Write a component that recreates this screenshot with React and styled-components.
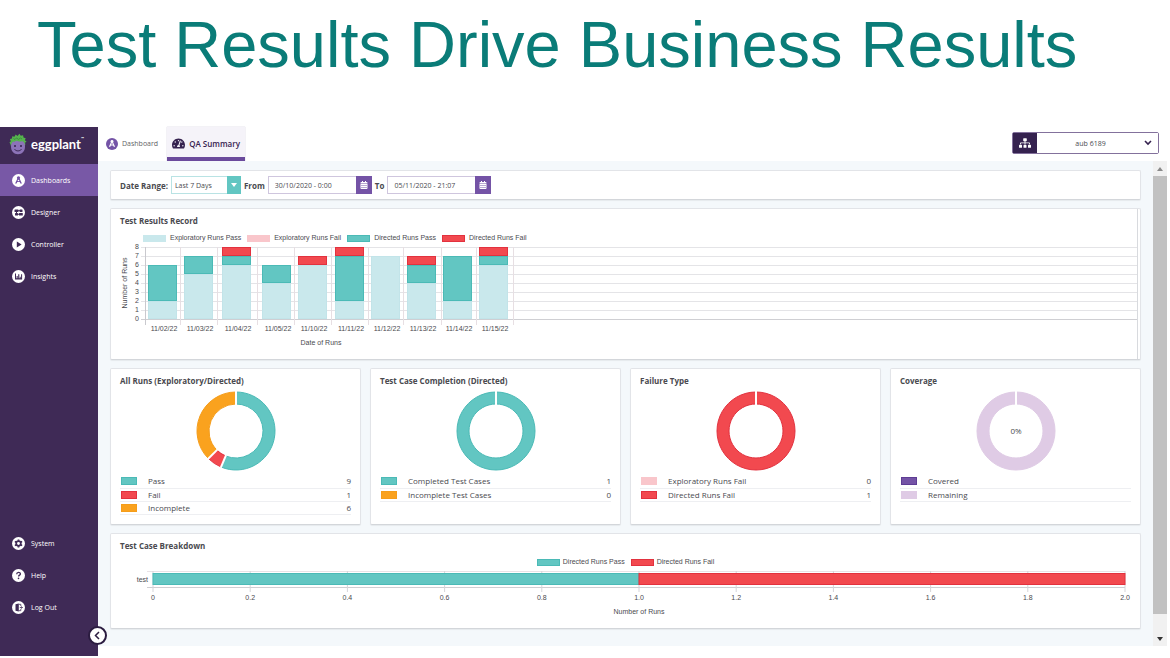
import React from 'react';
import styled, { createGlobalStyle } from 'styled-components';
import { FaCalendarAlt, FaSitemap, FaTachometerAlt } from 'react-icons/fa';

const colors = {
  teal: '#62c6c2',
  tealDark: '#4bbab6',
  aqua: '#c9e8ec',
  red: '#f2494f',
  redDark: '#e2323f',
  pink: '#f9c6cb',
  orange: '#faa21e',
  purple: '#7453a6',
  lilac: '#dfcbe5',
  dark: '#3f2a56',
  text: '#4a4a4f',
};

const uiFont = '"Open Sans", "Noto Sans", sans-serif';
const chartFont = '"Liberation Sans", Arial, sans-serif';

const GlobalStyle = createGlobalStyle`
  * {
    box-sizing: border-box;
  }

  body {
    margin: 0;
    background: #fff;
    color: ${colors.text};
    font-family: ${uiFont};
    font-size: 8px;
  }

  button, input, select {
    font-family: inherit;
    color: inherit;
  }
`;

const Page = styled.div`
  display: flex;
  flex-direction: column;
  min-height: 100vh;
  padding-bottom: 2px;
`;

const PageTitle = styled.h1`
  margin: 0;
  padding: 8px 37px 0;
  height: 127px;
  font-family: ${chartFont};
  font-size: 65px;
  font-weight: 400;
  line-height: 74px;
  white-space: nowrap;
  color: #0a7c78;
`;

const Shell = styled.div`
  display: flex;
  flex: 1;
`;

const Sidebar = styled.aside`
  position: relative;
  display: flex;
  flex-direction: column;
  flex: none;
  width: 98px;
  padding-bottom: 33px;
  background: ${colors.dark};
`;

const Logo = styled.div`
  display: flex;
  align-items: center;
  gap: 4px;
  height: 37px;
  padding: 0 0 4px 9px;
  color: #fff;
  font-family: Lato, sans-serif;
  font-size: 13px;
  font-weight: 700;
  line-height: 20px;

  sup {
    align-self: flex-start;
    margin: 6px 0 0 -4px;
    font-size: 4px;
    line-height: 12px;
  }
`;

const Nav = styled.nav`
  display: flex;
  flex-direction: column;

  &:last-of-type {
    margin-top: auto;
  }
`;

const NavLink = styled.a`
  display: flex;
  align-items: center;
  gap: 6px;
  height: 32px;
  padding: 0 0 0 12px;
  background: ${({ $active }) => ($active ? '#7858a6' : 'transparent')};
  color: #fff;
  font-size: 7px;
  font-weight: 400;
  text-decoration: none;
`;

const CollapseButton = styled.button`
  position: absolute;
  right: -9px;
  bottom: 11px;
  display: flex;
  align-items: center;
  justify-content: center;
  width: 19px;
  height: 19px;
  padding: 0;
  border: 2px solid #2b1c40;
  border-radius: 50%;
  background: #fff;
`;

const Main = styled.main`
  display: flex;
  flex-direction: column;
  flex: 1;
  min-width: 0;
  padding: 0 3px 10px 0;
`;

const TopBar = styled.header`
  display: flex;
  justify-content: space-between;
  height: 34px;
  padding-right: 8px;
`;

const Tabs = styled.div`
  display: flex;
`;

const Tab = styled.a`
  display: flex;
  align-items: center;
  gap: 4px;
  padding: ${({ $active }) => ($active ? '2px 5px 0' : '0 9px 1px 8px')};
  border-bottom: ${({ $active }) => ($active ? '4px solid #6b4a9c' : '0')};
  background: ${({ $active }) => ($active ? '#f5f3f9' : '#fff')};
  box-shadow: ${({ $active }) => ($active ? '0 0 1px #b9b3c6' : 'none')};
  color: ${({ $active }) => ($active ? '#35224f' : '#5f5f66')};
  font-size: ${({ $active }) => ($active ? '8px' : '7px')};
  font-weight: ${({ $active }) => ($active ? 600 : 400)};
  text-decoration: none;
`;

const SuitePicker = styled.label`
  position: relative;
  display: flex;
  width: 147px;
  height: 22px;
  margin-top: 5px;
  border: 1px solid #83719c;
  border-radius: 2px;

  > svg:last-child {
    position: absolute;
    top: 7px;
    right: 6px;
    pointer-events: none;
  }
`;

const PickerIcon = styled.span`
  display: flex;
  align-items: center;
  justify-content: center;
  width: 24px;
  background: #35224f;
  color: #fff;
  font-size: 12px;
`;

const PickerSelect = styled.select`
  flex: 1;
  padding: 0 14px 0 0;
  border: 0;
  appearance: none;
  background: #fff;
  font-size: 7px;
  text-align-last: center;
`;

const Workspace = styled.div`
  display: flex;
  flex: 1;
  background: #f4f8fb;
`;

const Content = styled.div`
  display: flex;
  flex-direction: column;
  flex: 1;
  gap: 8px;
  min-width: 0;
  padding: 9px 12px 0;
`;

const Card = styled.section`
  border: 1px solid #e2e4e8;
  border-bottom-color: #d3d6da;
  border-radius: 2px;
  background: #fff;
  box-shadow: 0 1px 1px rgba(0, 0, 0, 0.06);
`;

const Filters = styled(Card)`
  display: flex;
  align-items: center;
  gap: 3px;
  height: 30px;
  padding-left: 9px;
`;

const FilterLabel = styled.label`
  font-size: 8px;
  font-weight: 700;
`;

const Field = styled.div`
  display: flex;
  width: ${({ $width }) => $width}px;
  height: 18px;
  border: 1px solid ${({ $tone }) => $tone};

  select, input {
    flex: 1;
    min-width: 0;
    padding: 0 0 0 6px;
    border: 0;
    appearance: none;
    background: #fff;
    font-size: 7px;
  }

  select {
    padding-left: 3px;
  }
`;

const FieldButton = styled.button`
  display: flex;
  align-items: center;
  justify-content: center;
  width: ${({ $wide }) => ($wide ? 16 : 14)}px;
  margin: -1px;
  padding: 0;
  border: 0;
  background: ${({ $color }) => $color};
  color: #fff;
  font-size: 8px;
`;

const CardTitle = styled.h2`
  margin: 0;
  padding: 6px 9px 0;
  font-size: 8px;
  font-weight: 700;
  line-height: 11px;
`;

const RecordCard = styled(Card)`
  height: 152px;
  padding-right: 2px;
`;

const RecordBody = styled.div`
  height: 100%;
  border-right: 1px solid #d8dade;
`;

const Legend = styled.ul`
  display: flex;
  justify-content: ${({ $center }) => ($center ? 'center' : 'flex-start')};
  gap: 6px;
  margin: 0;
  padding: ${({ $center }) => ($center ? '6px 0 0' : '7px 0 0 32px')};
  list-style: none;
  font-family: ${chartFont};
  font-size: 7px;
  line-height: 10px;

  li {
    display: flex;
    align-items: center;
    gap: ${({ $center }) => ($center ? 3 : 4)}px;
  }
`;

const Swatch = styled.span`
  display: block;
  width: ${({ $small }) => ($small ? 16 : 23)}px;
  height: ${({ $small }) => ($small ? 8 : 7)}px;
  border: 1px solid ${({ $border }) => $border};
  background: ${({ $fill }) => $fill};
`;

const ChartSvg = styled.svg`
  display: block;
  width: 100%;
  overflow: visible;
  font-family: ${chartFont};
  font-size: 7px;
  fill: ${colors.text};
`;

const CardRow = styled.div`
  display: grid;
  grid-template-columns: repeat(4, 1fr);
  gap: 9px;
`;

const DonutCard = styled(Card)`
  height: 157px;
`;

const DonutSvg = styled.svg`
  display: block;
  margin: 5px auto 4px;
  font-family: ${uiFont};
  font-size: 8px;
  fill: ${colors.text};
`;

const Totals = styled.table`
  width: calc(100% - 18px);
  margin: 0 9px;
  border-collapse: collapse;
  font-size: 8px;
  line-height: 12px;

  tr {
    height: 13px;
    border-bottom: 1px solid #eeeff2;
  }

  th, td {
    padding: 0;
    font-weight: 400;
    text-align: left;
  }

  td:first-child {
    width: 28px;
    padding-left: 1px;
  }

  td:last-child {
    text-align: right;
  }
`;

const BreakdownCard = styled(Card)`
  height: 96px;
`;

const BreakdownPlot = styled.div`
  padding: 4px 15px 0 42px;
`;

const ScrollTrack = styled.div`
  display: flex;
  flex-direction: column;
  width: 14px;
  background: #f1f1f1;
`;

const ScrollButton = styled.button`
  display: flex;
  align-items: center;
  justify-content: center;
  height: 15px;
  padding: 0;
  border: 0;
  background: transparent;
`;

const ScrollThumb = styled.div`
  flex: 1;
  margin-bottom: 17px;
  background: #c1c1c1;
`;

const DashboardGlyph = ({ ink, paper }) => (
  <>
    <circle cx="6.5" cy="3.8" r="1.6" fill={ink} />
    <path d="M5.400 4.500h2.200l2.300 5H8.400L7.700 8.100H5.300l-.7 1.400H3.100z" fill={ink} />
    <circle cx="6.5" cy="6.5" r=".8" fill={paper} />
  </>
);

const glyphs = {
  dashboard: <DashboardGlyph ink={colors.purple} paper="#fff" />,
  designer: (
    <g fill={colors.dark}>
      <rect x="2.5" y="3.5" width="4" height="2.5" rx=".5" />
      <rect x="7.5" y="3.5" width="3" height="2.5" rx=".5" />
      <rect x="3" y="7" width="3" height="2.5" rx=".5" />
      <rect x="7" y="7" width="3.8" height="2.5" rx=".5" />
      <path d="M4 5h1v3H4zM6 7.8h2v.9H6zM6 4.3h2v.8H6z" />
    </g>
  ),
  controller: <path d="M4.8 3.5v6l4.8-3z" fill={colors.dark} />,
  insights: (
    <path d="M3 9.5v-6h1v4.8h.6V6h1.1v2.3h.5V4.2h1.1v4.1h.5V6.8h.9v1.500h.4v-4h1v5.2z" fill={colors.dark} />
  ),
  system: (
    <g stroke={colors.dark}>
      <circle cx="6.5" cy="6.5" r="2.300" fill="none" strokeWidth="1.7" />
      <path
        d="M6.5 2.4v1.4M6.5 9.2v1.4M2.9 4.4l1.3.8M8.8 7.8l1.3.8M2.9 8.6l1.3-.8M8.8 5.2l1.3-.8"
        strokeWidth="1.7"
      />
    </g>
  ),
  help: (
    <g>
      <path
        d="M4.7 5.2c0-2.5 3.7-2.3 3.7-.3 0 1.3-1.8 1.2-1.8 2.5"
        fill="none"
        stroke={colors.dark}
        strokeWidth="1.3"
      />
      <circle cx="6.5" cy="9.4" r=".8" fill={colors.dark} />
    </g>
  ),
  logout: (
    <g>
      <path d="m3.5 3.2 3.3-.8v8.2l-3.3-.8z" fill={colors.dark} />
      <path
        d="M6.8 3.3h2v1.8M6.8 9.7h2V7.9M7.8 6.5h2.5M9.3 5.4l1.2 1.1-1.2 1.1"
        fill="none"
        stroke={colors.dark}
        strokeWidth=".8"
      />
    </g>
  ),
};

const NavIcon = ({ name }) => (
  <svg width="13" height="13" viewBox="0 0 13 13" aria-hidden="true">
    <circle cx="6.5" cy="6.5" r="6.5" fill="#fff" />
    {glyphs[name]}
  </svg>
);

const EggplantMark = () => (
  <svg width="18" height="22" viewBox="0 0 18 22" aria-hidden="true">
    <path
      d="M1.700 12 .5 9.200l1.300-.6L1 6l2-.4.2-2.400 2.200.5L6.700 1.400l1.800 1.500L10.400.8l1.400 1.900 2.300-.5.4 2.300 2.200.7-.8 2 1.700 1.500-1.500.9.2 2.400-2 1-12.400.2z"
      fill="#55b34d"
    />
    <path
      d="M4 8.500c1.400.8 2.400-.6 3.600-.8 1.300-.2 2 .9 3.300.8 1.200-.1 2-.8 3.100.1 1.400 1 2 2.700 2 4.900 0 4.700-2.800 7.700-7 7.700s-7-3-7-7.700c0-2.200.7-4 2-5z"
      fill="#8c73b8"
    />
    <path d="m4.500 5.500 1.500 1L7.500 4.900l2 1.500 2-1.400 1.500 1" stroke="#347f3c" strokeWidth=".7" fill="none" />
    <circle cx="6" cy="13" r="1" fill="#33224c" />
    <circle cx="12" cy="13" r="1" fill="#33224c" />
    <path d="M5.500 16.200c1.600 2.300 5.400 2.300 7 0" stroke="#33224c" strokeWidth=".9" fill="none" />
  </svg>
);

const mainNav = [
  { icon: 'dashboard', label: 'Dashboards', active: true },
  { icon: 'designer', label: 'Designer' },
  { icon: 'controller', label: 'Controller' },
  { icon: 'insights', label: 'Insights' },
];

const footerNav = [
  { icon: 'system', label: 'System' },
  { icon: 'help', label: 'Help' },
  { icon: 'logout', label: 'Log Out' },
];

const seriesColors = {
  'Exploratory Runs Pass': [colors.aqua, colors.aqua],
  'Exploratory Runs Fail': [colors.pink, colors.pink],
  'Directed Runs Pass': [colors.teal, colors.tealDark],
  'Directed Runs Fail': [colors.red, colors.redDark],
};

// x is the left edge of the bar inside the plot, end is the category boundary
const runs = [
  { date: '11/02/22', x: 3, end: 35, explored: 2, passed: 4, failed: 0 },
  { date: '11/03/22', x: 39, end: 72, explored: 5, passed: 2, failed: 0 },
  { date: '11/04/22', x: 77, end: 112, explored: 6, passed: 1, failed: 1 },
  { date: '11/05/22', x: 117, end: 149, explored: 4, passed: 2, failed: 0 },
  { date: '11/10/22', x: 153, end: 186, explored: 6, passed: 0, failed: 1 },
  { date: '11/11/22', x: 190, end: 223, explored: 2, passed: 5, failed: 1 },
  { date: '11/12/22', x: 226, end: 258, explored: 7, passed: 0, failed: 0 },
  { date: '11/13/22', x: 262, end: 296, explored: 4, passed: 2, failed: 1 },
  { date: '11/14/22', x: 298, end: 331, explored: 2, passed: 5, failed: 0 },
  { date: '11/15/22', x: 334, end: 368, explored: 6, passed: 1, failed: 1 },
];

const donuts = [
  {
    title: 'All Runs (Exploratory/Directed)',
    rows: [
      { label: 'Pass', value: 9, fill: colors.teal, border: colors.tealDark },
      { label: 'Fail', value: 1, fill: colors.red, border: colors.redDark },
      { label: 'Incomplete', value: 6, fill: colors.orange, border: '#f59d1b' },
    ],
  },
  {
    title: 'Test Case Completion (Directed)',
    rows: [
      { label: 'Completed Test Cases', value: 1, fill: colors.teal, border: colors.tealDark },
      { label: 'Incomplete Test Cases', value: 0, fill: colors.orange, border: '#f59d1b' },
    ],
  },
  {
    title: 'Failure Type',
    rows: [
      { label: 'Exploratory Runs Fail', value: 0, fill: colors.pink, border: colors.pink },
      { label: 'Directed Runs Fail', value: 1, fill: colors.red, border: colors.redDark },
    ],
  },
  {
    title: 'Coverage',
    center: '0%',
    hideValues: true,
    rows: [
      { label: 'Covered', value: 0, fill: colors.purple, border: '#5e3d94' },
      { label: 'Remaining', value: 1, fill: colors.lilac, border: colors.lilac },
    ],
  },
];

const ChartLegend = ({ names, center }) => (
  <Legend $center={center}>
    {names.map((name) => (
      <li key={name}>
        <Swatch $fill={seriesColors[name][0]} $border={seriesColors[name][1]} />
        {name}
      </li>
    ))}
  </Legend>
);

const Segment = ({ x, from, count, fill, stroke }) =>
  count > 0 && (
    <rect
      x={x + 0.5}
      y={76.5 - (from + count) * 9}
      width="28"
      height={count * 9 - 1}
      fill={fill}
      stroke={stroke}
    />
  );

const RunsChart = () => (
  <ChartSvg height="108" role="img" aria-label="Test results by date">
    <text transform="translate(16 40) rotate(-90)" textAnchor="middle">Number of Runs</text>
    {[0, 1, 2, 3, 4, 5, 6, 7, 8].map((n) => (
      <g key={n}>
        <text x="28" y={78 - n * 9} textAnchor="end">{n}</text>
        <line x1="30" x2="100%" y1={76.5 - n * 9} y2={76.5 - n * 9} stroke={n ? '#e4e4e7' : '#cfcfd3'} />
      </g>
    ))}
    <svg x="34" y="0" overflow="visible">
      <line x1=".5" x2=".5" y1="4" y2="82" stroke="#c9c9ce" />
      {runs.map((run) => (
        <g key={run.date}>
          <line x1={run.end + 0.5} x2={run.end + 0.5} y1="4" y2="82" stroke="#e7dfe3" />
          <Segment x={run.x} from={0} count={run.explored} fill={colors.aqua} stroke="#c2e4e9" />
          <Segment x={run.x} from={run.explored} count={run.passed} fill={colors.teal} stroke={colors.tealDark} />
          <Segment
            x={run.x}
            from={run.explored + run.passed}
            count={run.failed}
            fill={colors.red}
            stroke={colors.redDark}
          />
          <text x={run.x + 16} y="88" textAnchor="middle">{run.date}</text>
        </g>
      ))}
      <text x="176" y="102" textAnchor="middle">Date of Runs</text>
    </svg>
  </ChartSvg>
);

const point = (fraction, radius) => {
  const angle = fraction * Math.PI * 2;
  return `${40 + radius * Math.sin(angle)} ${40 - radius * Math.cos(angle)}`;
};

const slicePath = (start, end) => {
  // a whole turn would collapse to nothing
  const stop = Math.min(end, start + 0.9999);
  const large = stop - start > 0.5 ? 1 : 0;
  return `M${point(start, 39)}A39 39 0 ${large} 1 ${point(stop, 39)}L${point(stop, 27)}A27 27 0 ${large} 0 ${point(start, 27)}Z`;
};

const Donut = ({ rows, center }) => {
  const total = rows.reduce((sum, row) => sum + row.value, 0);
  let used = 0;
  const slices = rows
    .filter((row) => row.value > 0)
    .map((row) => {
      const start = used / total;
      used += row.value;
      return { ...row, start, end: used / total };
    });

  return (
    <DonutSvg width="80" height="80" viewBox="0 0 80 80" role="img" aria-label="Donut chart">
      {slices.map((slice) => (
        <path key={slice.label} d={slicePath(slice.start, slice.end)} fill={slice.fill} stroke={slice.border} />
      ))}
      {slices.map((slice) => (
        <path
          key={slice.label}
          d={`M${point(slice.start, 26)}L${point(slice.start, 40)}`}
          stroke="#fff"
          strokeWidth="2"
        />
      ))}
      {center && <text x="40" y="43" textAnchor="middle">{center}</text>}
    </DonutSvg>
  );
};

const SummaryCard = ({ title, rows, center, hideValues }) => (
  <DonutCard>
    <CardTitle>{title}</CardTitle>
    <Donut rows={rows} center={center} />
    <Totals>
      <tbody>
        {rows.map((row) => (
          <tr key={row.label}>
            <td><Swatch $small $fill={row.fill} $border={row.border} /></td>
            <th scope="row">{row.label}</th>
            <td>{hideValues ? '' : row.value}</td>
          </tr>
        ))}
      </tbody>
    </Totals>
  </DonutCard>
);

const ticks = ['0', '0.2', '0.4', '0.6', '0.8', '1.0', '1.2', '1.4', '1.6', '1.8', '2.0'];

const BreakdownChart = () => (
  <BreakdownPlot>
    <ChartSvg height="46" role="img" aria-label="Directed runs for test">
      <line x1="-6" x2="100%" y1=".5" y2=".5" stroke="#e9e2e6" />
      <line x1="-6" x2="100%" y1="16.5" y2="16.5" stroke="#cfcfd3" />
      <text x="-5" y="11" textAnchor="end">test</text>
      {ticks.map((tick, i) => (
        <g key={tick}>
          <line x1={`${i * 10}%`} x2={`${i * 10}%`} y1="0" y2="21" stroke="#d5d5d9" />
          <text x={`${i * 10}%`} y="29" textAnchor="middle">{tick}</text>
        </g>
      ))}
      <rect x="0" y="2.5" width="50%" height="11" fill={colors.teal} stroke={colors.tealDark} />
      <rect x="50%" y="2.5" width="50%" height="11" fill={colors.red} stroke={colors.redDark} />
      <text x="50%" y="43" textAnchor="middle">Number of Runs</text>
    </ChartSvg>
  </BreakdownPlot>
);

const DateField = ({ id, value }) => (
  <Field $width={104} $tone="#cfc6de">
    <input id={id} type="text" defaultValue={value} />
    <FieldButton type="button" $wide $color={colors.purple} aria-label="Open calendar">
      <FaCalendarAlt />
    </FieldButton>
  </Field>
);

const App = () => {
  return (
    <Page>
      <GlobalStyle />
      <PageTitle>Test Results Drive Business Results</PageTitle>
      <Shell>
        <Sidebar>
          <Logo>
            <EggplantMark />
            eggplant
            <sup>™</sup>
          </Logo>
          <Nav>
            {mainNav.map((item) => (
              <NavLink key={item.label} href="#" $active={item.active}>
                <NavIcon name={item.icon} />
                {item.label}
              </NavLink>
            ))}
          </Nav>
          <Nav>
            {footerNav.map((item) => (
              <NavLink key={item.label} href="#">
                <NavIcon name={item.icon} />
                {item.label}
              </NavLink>
            ))}
          </Nav>
          <CollapseButton type="button" aria-label="Collapse menu">
            <svg width="9" height="9" viewBox="0 0 9 9">
              <path d="M6 1 2.5 4.5 6 8" fill="none" stroke="#2b1c40" strokeWidth="1.5" />
            </svg>
          </CollapseButton>
        </Sidebar>
        <Main>
          <TopBar>
            <Tabs>
              <Tab href="#">
                <svg width="12" height="12" viewBox="0 0 13 13" aria-hidden="true">
                  <circle cx="6.5" cy="6.5" r="6.5" fill={colors.purple} />
                  <DashboardGlyph ink="#fff" paper={colors.purple} />
                </svg>
                Dashboard
              </Tab>
              <Tab href="#" $active>
                <FaTachometerAlt size={13} />
                QA Summary
              </Tab>
            </Tabs>
            <SuitePicker>
              <PickerIcon><FaSitemap /></PickerIcon>
              <PickerSelect aria-label="Suite">
                <option>aub 6189</option>
              </PickerSelect>
              <svg width="8" height="6" viewBox="0 0 8 6" aria-hidden="true">
                <path d="m1 1 3 3 3-3" fill="none" stroke="#35224f" strokeWidth="1.6" />
              </svg>
            </SuitePicker>
          </TopBar>
          <Workspace>
            <Content>
              <Filters>
                <FilterLabel htmlFor="range">Date Range:</FilterLabel>
                <Field $width={70} $tone="#b9e3e4">
                  <select id="range">
                    <option>Last 7 Days</option>
                  </select>
                  <FieldButton type="button" $color={colors.teal} aria-label="Show ranges">
                    <svg width="6" height="4" viewBox="0 0 6 4">
                      <path d="M0 0h6L3 4z" fill="#fff" />
                    </svg>
                  </FieldButton>
                </Field>
                <FilterLabel htmlFor="from">From</FilterLabel>
                <DateField id="from" value="30/10/2020 - 0:00" />
                <FilterLabel htmlFor="to">To</FilterLabel>
                <DateField id="to" value="05/11/2020 - 21:07" />
              </Filters>
              <RecordCard>
                <RecordBody>
                  <CardTitle>Test Results Record</CardTitle>
                  <ChartLegend names={Object.keys(seriesColors)} />
                  <RunsChart />
                </RecordBody>
              </RecordCard>
              <CardRow>
                {donuts.map((donut) => (
                  <SummaryCard key={donut.title} {...donut} />
                ))}
              </CardRow>
              <BreakdownCard>
                <CardTitle>Test Case Breakdown</CardTitle>
                <ChartLegend center names={['Directed Runs Pass', 'Directed Runs Fail']} />
                <BreakdownChart />
              </BreakdownCard>
            </Content>
            <ScrollTrack>
              <ScrollButton type="button" aria-label="Scroll up">
                <svg width="6" height="4" viewBox="0 0 6 4"><path d="M0 4h6L3 0z" fill="#8a8a8a" /></svg>
              </ScrollButton>
              <ScrollThumb />
              <ScrollButton type="button" aria-label="Scroll down">
                <svg width="6" height="4" viewBox="0 0 6 4"><path d="M0 0h6L3 4z" fill="#333" /></svg>
              </ScrollButton>
            </ScrollTrack>
          </Workspace>
        </Main>
      </Shell>
    </Page>
  );
};

export default App;
